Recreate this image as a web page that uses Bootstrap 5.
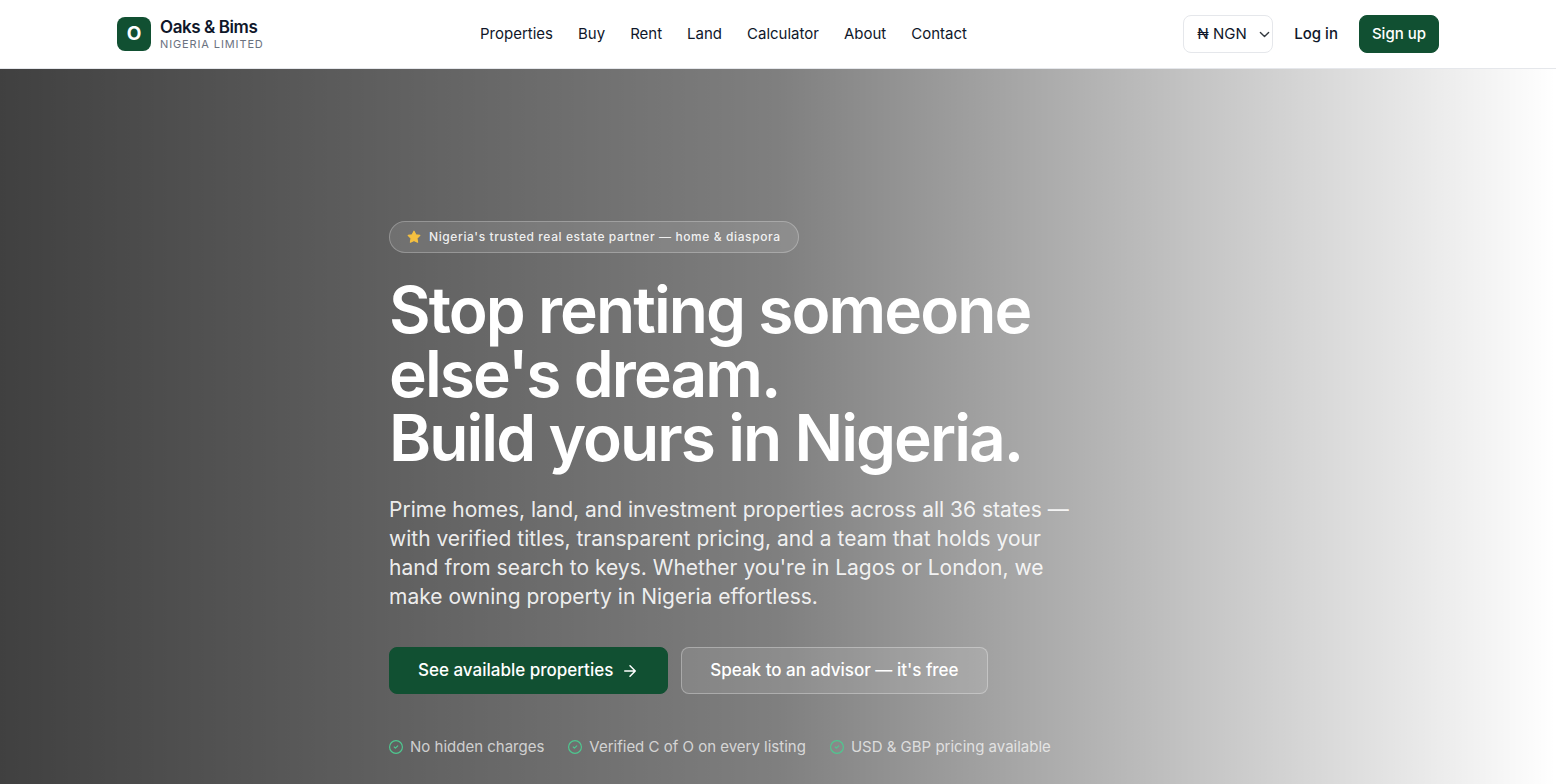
<!DOCTYPE html>
<html lang="en">
<head>
<meta charset="utf-8">
<meta name="viewport" content="width=device-width, initial-scale=1">
<title>Oaks &amp; Bims Nigeria Limited</title>
<link href="https://cdn.jsdelivr.net/npm/bootstrap@5.3.0/dist/css/bootstrap.min.css" rel="stylesheet">
<style>
  :root { --brand: #115032; --ink: #0f172a; }
  body { font-family: Inter, "Liberation Sans", sans-serif; color: var(--ink); font-size: 15px; line-height: 20px; }
  .site-header { border-bottom: 1px solid #e5e7eb; }
  .site-width { max-width: 1346px; min-height: 68px; }
  .brand-mark { width: 34px; height: 34px; border-radius: 8px; background: var(--brand); color: #fff; font-size: 19px; font-weight: 700; }
  .brand-name { font-size: 17px; font-weight: 600; line-height: 20px; letter-spacing: -.025em; }
  .brand-sub { font-size: 11px; line-height: 14px; letter-spacing: .08em; color: #6b7280; }
  .brand-link, .main-nav .nav-link, .login-link { color: var(--ink); }
  .brand-link { gap: 9px; }
  .main-nav { column-gap: 25px; }
  .account { gap: 21px; }
  .currency { width: 90px; height: 38px; padding: 0 24px 0 13px; font-size: 15px; color: var(--ink); border-color: #e5e7eb; border-radius: 8px; background-position: right 2px center; background-size: 11px 11px; }
  .btn-brand { --bs-btn-color: #fff; --bs-btn-bg: var(--brand); --bs-btn-border-color: var(--brand); --bs-btn-hover-color: #fff; --bs-btn-hover-bg: #0c3f27; --bs-btn-hover-border-color: #0c3f27; --bs-btn-active-bg: #0c3f27; --bs-btn-active-color: #fff; }
  .btn-signup { height: 38px; padding: 0 12px; font-size: 15px; font-weight: 500; border-radius: 8px; }
  .hero { min-height: calc(100vh - 69px); padding: 152px 0 28px; background: linear-gradient(to right, rgba(0,0,0,.75), rgba(0,0,0,.5) 50%, rgba(0,0,0,0)); color: #fff; }
  .hero-copy { max-width: 778px; }
  .trust-pill { padding: 5px 17px; border: 1px solid rgba(255,255,255,.25); background: rgba(255,255,255,.1); font-size: 12px; font-weight: 500; letter-spacing: .05em; color: rgba(255,255,255,.9); }
  .hero-title { margin: 25px 0; font-size: 64px; line-height: 64px; font-weight: 600; letter-spacing: -.03em; }
  .hero-text { max-width: 700px; margin-bottom: 36px; font-size: 21px; line-height: 29px; color: rgba(255,255,255,.9); }
  .btn-hero { height: 47px; padding: 0 28px; font-size: 17px; font-weight: 500; border-radius: 8px; }
  .btn-glass { --bs-btn-color: #fff; --bs-btn-bg: rgba(255,255,255,.1); --bs-btn-border-color: rgba(255,255,255,.3); --bs-btn-hover-color: #fff; --bs-btn-hover-bg: rgba(255,255,255,.2); --bs-btn-hover-border-color: rgba(255,255,255,.4); }
  .actions { gap: 13px; }
  .assurances { gap: 8px 24px; margin-top: 43px; color: rgba(255,255,255,.7); }
  .assurances li { gap: 7px; }
  .assurances svg { color: #4ec890; }
</style>
</head>
<body>
<header class="site-header bg-white">
  <div class="site-width container-fluid d-flex flex-wrap align-items-center justify-content-between">
    <a href="#" class="brand-link d-flex align-items-center text-decoration-none">
      <span class="brand-mark d-flex align-items-center justify-content-center">O</span>
      <span class="d-flex flex-column">
        <span class="brand-name">Oaks &amp; Bims</span>
        <span class="brand-sub">NIGERIA LIMITED</span>
      </span>
    </a>
    <nav class="nav main-nav" aria-label="Main">
      <a class="nav-link p-0" href="#">Properties</a>
      <a class="nav-link p-0" href="#">Buy</a>
      <a class="nav-link p-0" href="#">Rent</a>
      <a class="nav-link p-0" href="#">Land</a>
      <a class="nav-link p-0" href="#">Calculator</a>
      <a class="nav-link p-0" href="#">About</a>
      <a class="nav-link p-0" href="#">Contact</a>
    </nav>
    <div class="account d-flex align-items-center">
      <select class="form-select currency" aria-label="Currency">
        <option>₦ NGN</option>
        <option>$ USD</option>
        <option>£ GBP</option>
      </select>
      <a href="#" class="login-link text-decoration-none fw-medium">Log in</a>
      <button type="button" class="btn btn-brand btn-signup">Sign up</button>
    </div>
  </div>
</header>
<main class="hero">
  <div class="hero-copy mx-auto">
    <div class="trust-pill d-inline-flex align-items-center rounded-pill gap-2">
      <svg width="14" height="14" viewBox="0 0 24 24" fill="#f5c040" stroke="#f5c040" stroke-width="2" stroke-linejoin="round" aria-hidden="true"><path d="M12 2l3.1 6.3 6.900 1-5 4.900 1.200 6.800-6.200-3.200L5.800 21 7 14.200 2 9.300l6.900-1z"/></svg>
      <span>Nigeria's trusted real estate partner — home &amp; diaspora</span>
    </div>
    <h1 class="hero-title">Stop renting someone else's dream.<br>Build yours in Nigeria.</h1>
    <p class="hero-text">Prime homes, land, and investment properties across all 36 states — with verified titles, transparent pricing, and a team that holds your hand from search to keys. Whether you're in Lagos or London, we make owning property in Nigeria effortless.</p>
    <div class="actions d-flex flex-wrap">
      <button type="button" class="btn btn-brand btn-hero d-inline-flex align-items-center gap-2">See available properties
        <svg width="18" height="18" viewBox="0 0 24 24" fill="none" stroke="currentColor" stroke-width="2" stroke-linecap="round" stroke-linejoin="round" aria-hidden="true"><path d="M5 12h14M12 5l7 7-7 7"/></svg>
      </button>
      <button type="button" class="btn btn-glass btn-hero">Speak to an advisor — it's free</button>
    </div>
    <ul class="assurances list-unstyled d-flex flex-wrap mb-0">
      <li class="d-flex align-items-center"><svg width="14" height="14" viewBox="0 0 24 24" fill="none" stroke="currentColor" stroke-width="2" stroke-linecap="round" stroke-linejoin="round" aria-hidden="true"><circle cx="12" cy="12" r="11"/><path d="M9 12l2 2 4-4"/></svg>No hidden charges</li>
      <li class="d-flex align-items-center"><svg width="14" height="14" viewBox="0 0 24 24" fill="none" stroke="currentColor" stroke-width="2" stroke-linecap="round" stroke-linejoin="round" aria-hidden="true"><circle cx="12" cy="12" r="11"/><path d="M9 12l2 2 4-4"/></svg>Verified C of O on every listing</li>
      <li class="d-flex align-items-center"><svg width="14" height="14" viewBox="0 0 24 24" fill="none" stroke="currentColor" stroke-width="2" stroke-linecap="round" stroke-linejoin="round" aria-hidden="true"><circle cx="12" cy="12" r="11"/><path d="M9 12l2 2 4-4"/></svg>USD &amp; GBP pricing available</li>
    </ul>
  </div>
</main>
<script src="https://cdn.jsdelivr.net/npm/bootstrap@5.3.0/dist/js/bootstrap.bundle.min.js"></script>
</body>
</html>
